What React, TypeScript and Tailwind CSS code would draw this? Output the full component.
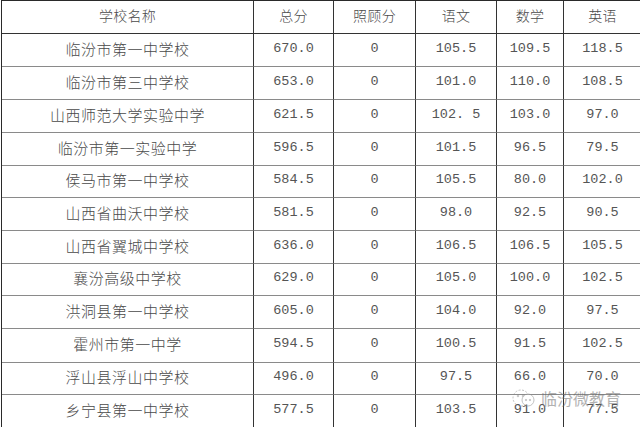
import React from "react";

const rows: [string, string, string, string, string, string][] = [
  ["临汾市第一中学校", "670.0", "0", "105.5", "109.5", "118.5"],
  ["临汾市第三中学校", "653.0", "0", "101.0", "110.0", "108.5"],
  ["山西师范大学实验中学", "621.5", "0", "102. 5", "103.0", "97.0"],
  ["临汾市第一实验中学", "596.5", "0", "101.5", "96.5", "79.5"],
  ["侯马市第一中学校", "584.5", "0", "105.5", "80.0", "102.0"],
  ["山西省曲沃中学校", "581.5", "0", "98.0", "92.5", "90.5"],
  ["山西省翼城中学校", "636.0", "0", "106.5", "106.5", "105.5"],
  ["襄汾高级中学校", "629.0", "0", "105.0", "100.0", "102.5"],
  ["洪洞县第一中学校", "605.0", "0", "104.0", "92.0", "97.5"],
  ["霍州市第一中学", "594.5", "0", "100.5", "91.5", "102.5"],
  ["浮山县浮山中学校", "496.0", "0", "97.5", "66.0", "70.0"],
  ["乡宁县第一中学校", "577.5", "0", "103.5", "91.0", "77.5"],
];

const headers = ["学校名称", "总分", "照顾分", "语文", "数学", "英语"];
const rowH = [33, 33, 33, 33, 32, 33, 33, 32, 33, 34, 32, 33];

const cjk = { fontFamily: '"Noto Sans CJK SC", sans-serif' };
const mono = { fontFamily: '"Liberation Mono", monospace' };

export default function App() {
  return (
    <div className="relative w-[640px] h-[427px] overflow-hidden bg-white">
      <div className="ml-[1px] w-[640px] border-l border-t border-[#2a2a2a] grid grid-cols-[252px_80px_82px_81px_67px_78px]">
        {headers.map((h) => (
          <div
            key={h}
            className="h-[33px] border-r border-b border-r-[#333] border-b-[#333] flex items-center justify-center text-[14px] font-light tracking-[0.3px] text-[#4a4a4a] pb-[4px]"
            style={cjk}
          >
            {h}
          </div>
        ))}
        {rows.map((r, ri) =>
          r.map((c, ci) => (
            <div
              key={ri + "-" + ci}
              style={{ height: rowH[ri], ...(ci === 0 ? cjk : mono) }}
              className={
                "border-r border-b border-r-[#333] border-b-[#8a8a8a] flex items-center justify-center whitespace-pre " +
                (ci === 0
                  ? "text-[15px] font-light tracking-[0.5px] text-[#4a4a4a] pb-[2px]"
                  : "text-[13.5px] text-[#555] pb-[2px]")
              }
            >
              {c}
            </div>
          ))
        )}
      </div>
      <div className="absolute left-[511px] top-[389px] flex items-center gap-[4px] opacity-50">
        <svg width="26" height="18" viewBox="0 0 26 18" fill="none" stroke="#888" strokeWidth="1">
          <circle cx="10" cy="9" r="8" strokeDasharray="2 1.5" />
          <circle cx="17" cy="11" r="6" fill="white" />
          <circle cx="7" cy="7" r="0.8" fill="#888" />
          <circle cx="12" cy="7" r="0.8" fill="#888" />
          <circle cx="15" cy="11" r="0.7" fill="#888" />
          <circle cx="19" cy="11" r="0.7" fill="#888" />
        </svg>
        <span className="text-[16px] text-[#666] leading-none" style={cjk}>
          临汾微教育
        </span>
      </div>
    </div>
  );
}
